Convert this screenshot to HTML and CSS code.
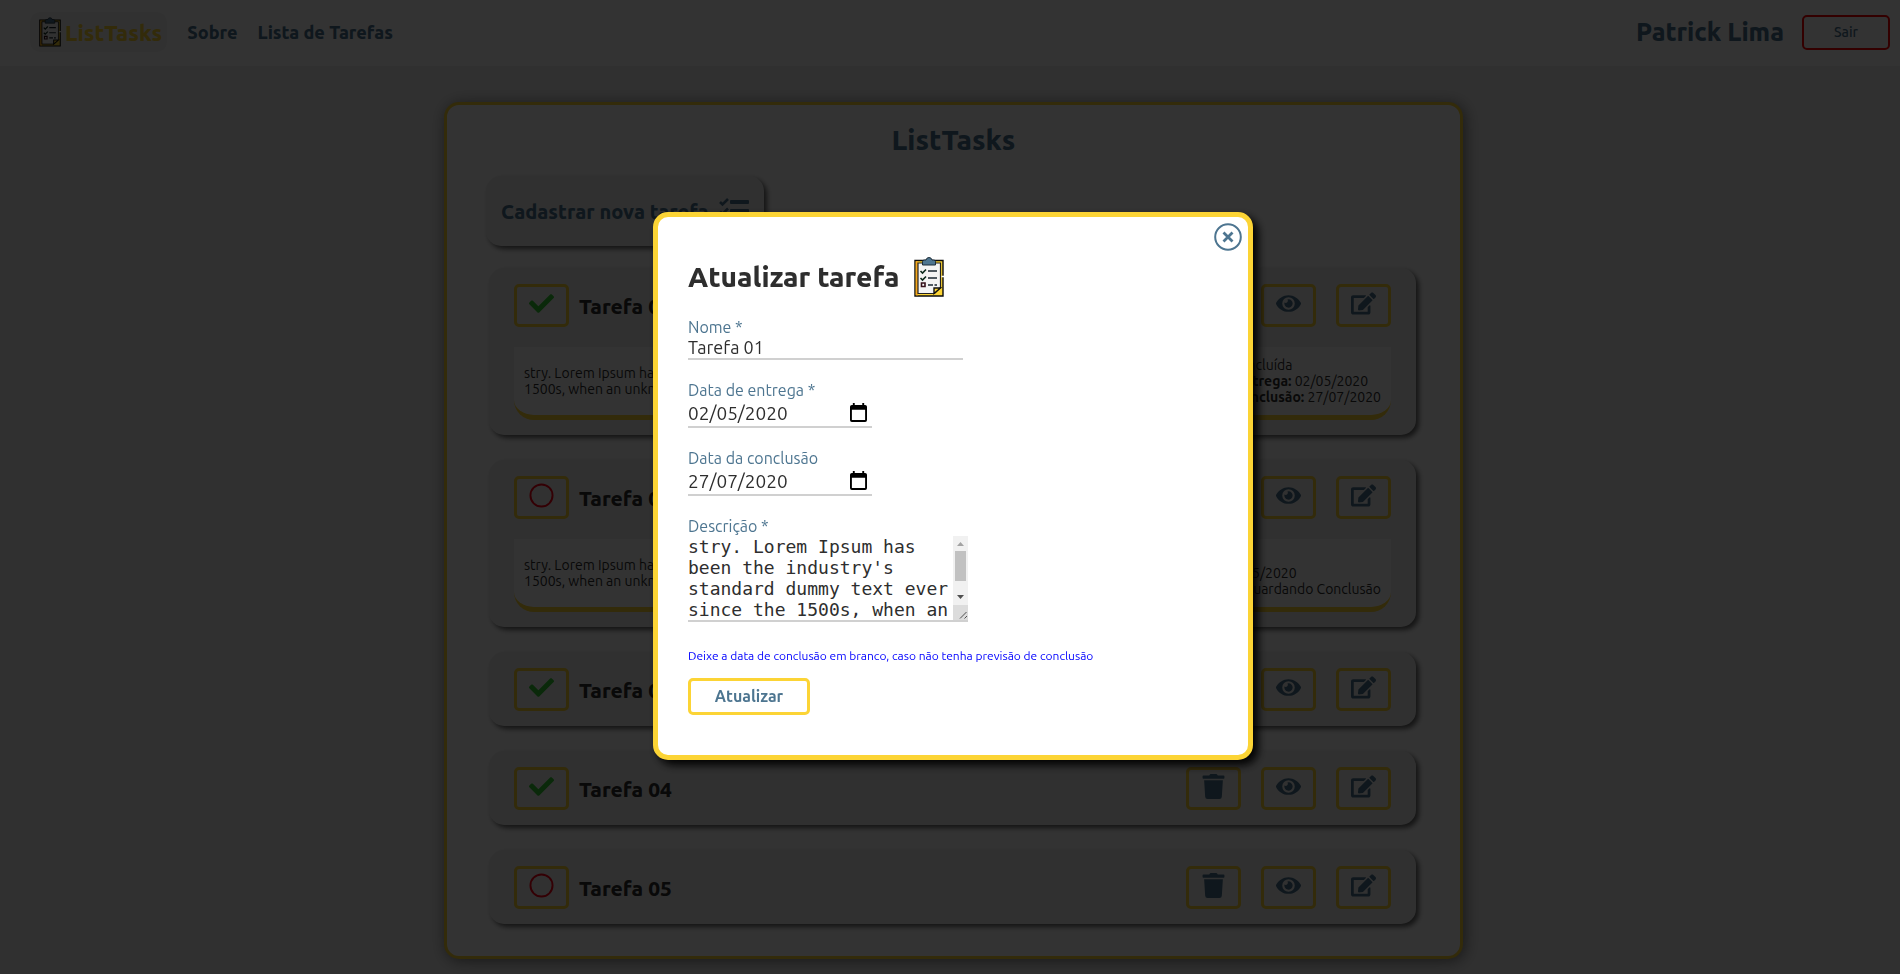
FILE: index.html
```html
<!DOCTYPE html>
<html lang="pt-BR">
<head>
<meta charset="utf-8">
<meta name="viewport" content="width=device-width, initial-scale=1">
<title>ListTasks</title>
<link rel="stylesheet" href="styles.css">
</head>
<body>
<svg class="sprite" aria-hidden="true">
  <symbol id="clipboard" viewBox="0 0 30 40">
    <path fill="#fcd435" stroke="#0b0b0b" stroke-width="1.4" d="M1 3.500h28v35.500H1z"/>
    <path fill="#f5a51d" d="M1.700 4.200h2.300v34.100H1.700z"/>
    <path fill="#f4f4f4" stroke="#222" stroke-width="1.200" d="M4 6h22.500v24.500l-6 6H4z"/>
    <path fill="#fcd435" stroke="#111" stroke-width="1.400" d="M20 36.500V31h6.500z"/>
    <path fill="#4d7590" stroke="#1b2c38" stroke-width="1" d="M8.500 8V4.500q0-1.500 2-1.500H12q.5-2.500 3-2.500T18 3h1.500q2 0 2 1.500V8z"/>
    <path fill="none" stroke="#0c2a1c" stroke-width="1.600" d="M6.500 14l2 2 3.500-3.500M6.500 21l2 2 3.500-3.500"/>
    <path fill="none" stroke="#1a2630" stroke-width="1.500" d="M14 14h9M14 21h9M14 28h5M20.500 28h2.500"/>
    <path fill="#fff" stroke="#35101a" stroke-width="1.600" d="M7.500 26h3.500v3.500H7.500z"/>
    <path stroke="#fff" stroke-width="1.500" d="M27.500 19.500h2.500"/>
  </symbol>
  <symbol id="check" viewBox="0 0 512 512"><path d="M173.898 439.404l-166.400-166.400c-9.997-9.997-9.997-26.206 0-36.204l36.203-36.204c9.997-9.998 26.207-9.998 36.204 0L192 312.690 432.095 72.596c9.997-9.997 26.207-9.997 36.204 0l36.203 36.204c9.997 9.997 9.997 26.206 0 36.204l-294.400 294.401c-9.998 9.997-26.207 9.997-36.204-.001z"/></symbol>
  <symbol id="circle" viewBox="0 0 26 26"><circle cx="13" cy="13" r="11.500" fill="none" stroke="currentColor" stroke-width="2"/></symbol>
  <symbol id="trash" viewBox="0 0 448 512"><path d="M432 32H312l-9.400-18.700A24 24 0 0 0 281.100 0H166.800a23.720 23.720 0 0 0-21.400 13.300L136 32H16A16 16 0 0 0 0 48v32a16 16 0 0 0 16 16h416a16 16 0 0 0 16-16V48a16 16 0 0 0-16-16zM53.200 467a48 48 0 0 0 47.900 45h245.800a48 48 0 0 0 47.900-45L416 128H32z"/></symbol>
  <symbol id="eye" viewBox="0 0 576 512"><path d="M572.520 241.400C518.290 135.590 410.930 64 288 64S57.680 135.640 3.480 241.410a32.350 32.350 0 0 0 0 29.190C57.710 376.410 165.070 448 288 448s230.320-71.640 284.520-177.410a32.350 32.350 0 0 0 0-29.190zM288 400a144 144 0 1 1 144-144 143.930 143.930 0 0 1-144 144zm0-240a95.310 95.310 0 0 0-25.310 3.790 47.850 47.850 0 0 1-66.900 66.900A95.780 95.780 0 1 0 288 160z"/></symbol>
  <symbol id="edit" viewBox="0 0 576 512"><path d="M402.600 83.200l90.200 90.200c3.800 3.800 3.800 10 0 13.800L274.400 405.600l-92.800 10.300c-12.400 1.400-22.900-9.100-21.500-21.500l10.300-92.800L388.800 83.200c3.800-3.800 10-3.800 13.800 0zm162-22.900l-48.800-48.800c-15.200-15.200-39.900-15.200-55.200 0l-35.400 35.400c-3.800 3.800-3.800 10 0 13.800l90.200 90.200c3.800 3.800 10 3.800 13.800 0l35.400-35.400c15.200-15.300 15.200-40 0-55.200zM384 346.200V448H64V128h229.800c3.200 0 6.200-1.300 8.500-3.500l40-40c7.600-7.600 2.100-20.500-8.500-20.500H48C21.500 64 0 85.500 0 112v352c0 26.500 21.500 48 48 48h352c26.500 0 48-21.500 48-48V306.200c0-10.700-12.900-16-20.500-8.500l-40 40c-2.200 2.300-3.500 5.300-3.500 8.500z"/></symbol>
  <symbol id="tasks" viewBox="0 0 30 26">
    <path fill="none" stroke="currentColor" stroke-width="2.600" d="M1 4l2.500 2.500L9 1M1 13.500l2.500 2.500L9 10.500"/>
    <circle cx="4" cy="23" r="2.500"/>
    <rect x="11" y="2" width="19" height="4" rx="1"/><rect x="11" y="11" width="19" height="4" rx="1"/><rect x="11" y="21" width="19" height="4" rx="1"/>
  </symbol>
  <symbol id="calendar" viewBox="0 0 18 20"><path fill-rule="evenodd" d="M3 0h2v2h8V0h2v2h1q2 0 2 2v14q0 2-2 2H2q-2 0-2-2V4q0-2 2-2h1zM2 7v11h14V7z"/></symbol>
  <symbol id="close" viewBox="0 0 28 28"><g fill="none" stroke="currentColor"><circle cx="14" cy="14" r="12.800" stroke-width="2"/><path stroke-width="2.800" d="M9.500 9.500l9 9M18.500 9.500l-9 9"/></g></symbol>
  <symbol id="scrollbar" viewBox="0 0 15 84">
    <path fill="#f1f1f1" d="M0 0h15v84H0z"/>
    <path fill="#a3a3a3" d="M4 10l3.500-4 3.500 4z"/>
    <path fill="#c1c1c1" d="M2 15h11v30H2z"/>
    <path fill="#505050" d="M4 59l3.500 4 3.500-4z"/>
    <path fill="#dcdcdc" d="M0 69h15v15H0z"/>
    <path fill="none" stroke="#505050" d="M7 82.500l6.500-6.500M11.500 82.500l2.500-2.500"/>
  </symbol>
</svg>

<header class="navbar">
  <nav class="nav-links">
    <a class="brand" href="#"><svg class="brand-icon"><use href="#clipboard"/></svg>ListTasks</a>
    <a class="nav-link" href="#">Sobre</a>
    <a class="nav-link" href="#">Lista de Tarefas</a>
  </nav>
  <div class="user">
    <strong class="user-name">Patrick Lima</strong>
    <button class="logout" type="button">Sair</button>
  </div>
</header>

<main class="page">
  <section class="board">
    <h1 class="board-title">ListTasks</h1>
    <button class="new-task" type="button">Cadastrar nova tarefa <svg class="new-task-icon"><use href="#tasks"/></svg></button>
    <ul class="tasks">
      <li class="task">
        <div class="task-row">
          <button class="icon-button done" type="button" aria-label="Concluída"><svg><use href="#check"/></svg></button>
          <h2 class="task-name">Tarefa 01</h2>
          <button class="icon-button" type="button" aria-label="Excluir"><svg><use href="#trash"/></svg></button>
          <button class="icon-button" type="button" aria-label="Ver"><svg><use href="#eye"/></svg></button>
          <button class="icon-button" type="button" aria-label="Editar"><svg><use href="#edit"/></svg></button>
        </div>
        <div class="details">
          <p class="details-text">stry. Lorem Ipsum has been the industry's standard dummy text ever since the<br>1500s, when an unknown printer took a galley of type</p>
          <p class="details-info"><b>Status:</b> Concluída<br><b>Data de entrega:</b> 02/05/2020<br><b>Data da conclusão:</b> 27/07/2020</p>
        </div>
      </li>
      <li class="task">
        <div class="task-row">
          <button class="icon-button pending" type="button" aria-label="Pendente"><svg><use href="#circle"/></svg></button>
          <h2 class="task-name">Tarefa 02</h2>
          <button class="icon-button" type="button" aria-label="Excluir"><svg><use href="#trash"/></svg></button>
          <button class="icon-button" type="button" aria-label="Ver"><svg><use href="#eye"/></svg></button>
          <button class="icon-button" type="button" aria-label="Editar"><svg><use href="#edit"/></svg></button>
        </div>
        <div class="details">
          <p class="details-text">stry. Lorem Ipsum has been the industry's standard dummy text ever since the<br>1500s, when an unknown printer took a galley of type</p>
          <p class="details-info"><b>Status:</b> Pendente<br><b>Data de entrega:</b> 02/05/2020<br><b>Data da conclusão:</b> Aguardando Conclusão</p>
        </div>
      </li>
      <li class="task">
        <div class="task-row">
          <button class="icon-button done" type="button" aria-label="Concluída"><svg><use href="#check"/></svg></button>
          <h2 class="task-name">Tarefa 03</h2>
          <button class="icon-button" type="button" aria-label="Excluir"><svg><use href="#trash"/></svg></button>
          <button class="icon-button" type="button" aria-label="Ver"><svg><use href="#eye"/></svg></button>
          <button class="icon-button" type="button" aria-label="Editar"><svg><use href="#edit"/></svg></button>
        </div>
      </li>
      <li class="task">
        <div class="task-row">
          <button class="icon-button done" type="button" aria-label="Concluída"><svg><use href="#check"/></svg></button>
          <h2 class="task-name">Tarefa 04</h2>
          <button class="icon-button" type="button" aria-label="Excluir"><svg><use href="#trash"/></svg></button>
          <button class="icon-button" type="button" aria-label="Ver"><svg><use href="#eye"/></svg></button>
          <button class="icon-button" type="button" aria-label="Editar"><svg><use href="#edit"/></svg></button>
        </div>
      </li>
      <li class="task">
        <div class="task-row">
          <button class="icon-button pending" type="button" aria-label="Pendente"><svg><use href="#circle"/></svg></button>
          <h2 class="task-name">Tarefa 05</h2>
          <button class="icon-button" type="button" aria-label="Excluir"><svg><use href="#trash"/></svg></button>
          <button class="icon-button" type="button" aria-label="Ver"><svg><use href="#eye"/></svg></button>
          <button class="icon-button" type="button" aria-label="Editar"><svg><use href="#edit"/></svg></button>
        </div>
      </li>
    </ul>
  </section>
</main>

<div class="overlay">
  <form class="modal" role="dialog" aria-labelledby="modal-title">
    <button class="close" type="button" aria-label="Fechar"><svg><use href="#close"/></svg></button>
    <h2 class="modal-title" id="modal-title">Atualizar tarefa <svg class="modal-icon"><use href="#clipboard"/></svg></h2>
    <div class="field">
      <label for="name">Nome *</label>
      <input class="control name" id="name" type="text" value="Tarefa 01">
    </div>
    <div class="field">
      <label for="due">Data de entrega *</label>
      <div class="date">
        <input class="control" id="due" type="text" inputmode="numeric" value="02/05/2020">
        <button class="picker" type="button" aria-label="Abrir calendário"><svg><use href="#calendar"/></svg></button>
      </div>
    </div>
    <div class="field">
      <label for="end">Data da conclusão</label>
      <div class="date">
        <input class="control" id="end" type="text" inputmode="numeric" value="27/07/2020">
        <button class="picker" type="button" aria-label="Abrir calendário"><svg><use href="#calendar"/></svg></button>
      </div>
    </div>
    <div class="field">
      <label for="description">Descrição *</label>
      <div class="description-box">
        <textarea class="description" id="description">stry. Lorem Ipsum has been the industry's standard dummy text ever since the 1500s, when an unknown printer took a galley of type and scrambled it to make a type specimen</textarea>
        <svg class="scrollbar" aria-hidden="true"><use href="#scrollbar"/></svg>
      </div>
    </div>
    <p class="hint">Deixe a data de conclusão em branco, caso não tenha previsão de conclusão</p>
    <button class="submit" type="submit">Atualizar</button>
  </form>
</div>
</body>
</html>
```
FILE: styles.css
```css
:root {
  --yellow: #fcd435;
  --blue: #4d7590;
  --ink: #2e2e2e;
}

* {
  box-sizing: border-box;
  margin: 0;
  padding: 0;
}

body {
  background: #f0f0f0;
  color: var(--ink);
  font-family: Ubuntu, "Noto Sans", sans-serif;
  min-height: 100vh;
}

button,
input {
  font-family: inherit;
}

svg {
  fill: currentColor;
}

.sprite {
  position: absolute;
  width: 0;
  height: 0;
}

.navbar {
  display: flex;
  justify-content: space-between;
  align-items: center;
  height: 66px;
  padding: 0 10px 2px 30px;
  background: #fff;
}

.nav-links,
.user {
  display: flex;
  align-items: center;
}

.nav-links {
  gap: 20px;
}

.brand {
  display: flex;
  align-items: center;
  gap: 4px;
  height: 40px;
  padding: 0 5px 0 9px;
  border-radius: 10px;
  background: #f5f5f5;
  color: var(--yellow);
  font-size: 22px;
  font-weight: 800;
  text-decoration: none;
}

.brand-icon {
  width: 22px;
  height: 30px;
}

.nav-link {
  color: var(--blue);
  font-size: 18px;
  font-weight: 800;
  text-decoration: none;
}

.user {
  gap: 18px;
}

.user-name {
  color: var(--blue);
  font-size: 25px;
  font-weight: 800;
}

.logout {
  width: 88px;
  height: 35px;
  border: 2px solid #f00;
  border-radius: 5px;
  background: #fff;
  color: var(--blue);
  font-size: 14px;
  font-weight: 500;
}

.page {
  display: flex;
  justify-content: center;
  padding: 36px 0 15px 7px;
}

.board {
  width: 100%;
  max-width: 1019px;
  padding: 17px 39px 32px;
  border: 3px solid var(--yellow);
  border-radius: 15px;
  background: #fff;
  box-shadow: 2px 2px 15px rgba(0, 0, 0, 0.5);
}

.board-title {
  color: var(--blue);
  font-size: 28px;
  font-weight: 800;
  line-height: 36px;
  text-align: center;
}

.new-task {
  display: flex;
  align-items: center;
  gap: 10px;
  height: 70px;
  margin: 18px 0 22px;
  padding: 0 15px;
  border: 0;
  border-radius: 15px;
  background: #f0f0f0;
  box-shadow: 3px 3px 5px rgba(0, 0, 0, 0.6);
  color: var(--blue);
  font-size: 20px;
  font-weight: 800;
}

.new-task-icon {
  width: 30px;
  height: 26px;
}

.tasks {
  display: grid;
  gap: 25px;
  padding: 0 5px 0 3px;
  list-style: none;
}

.task {
  padding: 16px 25px 15px;
  border-radius: 15px;
  background: #f0f0f0;
  box-shadow: 3px 3px 5px rgba(0, 0, 0, 0.6);
}

.task-row {
  display: flex;
  align-items: center;
  gap: 20px;
}

.icon-button {
  display: grid;
  place-items: center;
  width: 55px;
  height: 43px;
  padding-bottom: 4px;
  border: 3px solid var(--yellow);
  border-radius: 5px;
  background: #f5f5f5;
  color: var(--blue);
}

.task-row .icon-button:first-child {
  margin-right: -10px;
}

.icon-button svg {
  width: 25px;
  height: 25px;
}

.done {
  color: #32cd32;
}

.pending {
  color: #ff0016;
}

.task-name {
  flex: 1;
  font-size: 21px;
  font-weight: 800;
  line-height: 24px;
}

.details {
  display: flex;
  justify-content: space-between;
  align-items: center;
  margin-top: 20px;
  padding: 10px;
  min-height: 73px;
  border-bottom: 5px solid var(--yellow);
  border-radius: 0 0 20px 20px;
  background: #fff;
  font-size: 14px;
  line-height: 16px;
}

.overlay {
  position: fixed;
  inset: 0;
  display: grid;
  place-items: center;
  padding: 0 0 2px 6px;
  background: rgba(0, 0, 0, 0.8);
}

.modal {
  position: relative;
  width: 100%;
  max-width: 600px;
  padding: 40px 30px;
  border: 5px solid var(--yellow);
  border-radius: 15px;
  background: #fff;
  box-shadow: 5px 5px 10px #000;
}

.close {
  position: absolute;
  top: 6px;
  right: 6px;
  width: 28px;
  height: 28px;
  border: 0;
  background: none;
  color: var(--blue);
}

.close svg {
  display: block;
  width: 28px;
  height: 28px;
}

.modal-title {
  display: flex;
  align-items: center;
  gap: 15px;
  margin-bottom: 20px;
  font-size: 28px;
  font-weight: 800;
  line-height: 40px;
}

.modal-icon {
  width: 30px;
  height: 40px;
}

.field {
  display: flex;
  flex-direction: column;
  align-items: flex-start;
  margin-bottom: 20px;
}

.field label {
  color: var(--blue);
  font-size: 16px;
  line-height: 20px;
}

.control {
  width: 100%;
  height: 28px;
  border: 0;
  border-bottom: 2px solid #d0d0d0;
  background: none;
  color: var(--ink);
  font-size: 18px;
}

.name {
  max-width: 275px;
  height: 23px;
  padding-bottom: 2px;
}

.date {
  display: grid;
  width: 184px;
}

.date .control,
.picker {
  grid-area: 1 / 1;
}

.date .control {
  font-size: 19px;
}

.picker {
  justify-self: end;
  align-self: start;
  width: 17px;
  height: 19px;
  margin: 3px 5px 0 0;
  border: 0;
  background: none;
  color: #000;
}

.picker svg {
  display: block;
  width: 17px;
  height: 19px;
}

.description-box {
  display: flex;
  width: 280px;
  height: 86px;
  border-bottom: 2px solid #d0d0d0;
}

.description {
  flex: 1;
  min-width: 0;
  border: 0;
  color: var(--ink);
  font-family: "DejaVu Sans Mono", monospace;
  font-size: 18px;
  line-height: 21px;
  resize: none;
  scrollbar-width: none;
}

.scrollbar {
  width: 15px;
  height: 84px;
}

.hint {
  margin: 26px 0 14px;
  color: #00f;
  font-size: 12px;
  line-height: 16px;
}

.submit {
  width: 122px;
  height: 37px;
  padding-bottom: 2px;
  border: 3px solid var(--yellow);
  border-radius: 5px;
  background: #fff;
  color: var(--blue);
  font-size: 16px;
  font-weight: 600;
}
```
